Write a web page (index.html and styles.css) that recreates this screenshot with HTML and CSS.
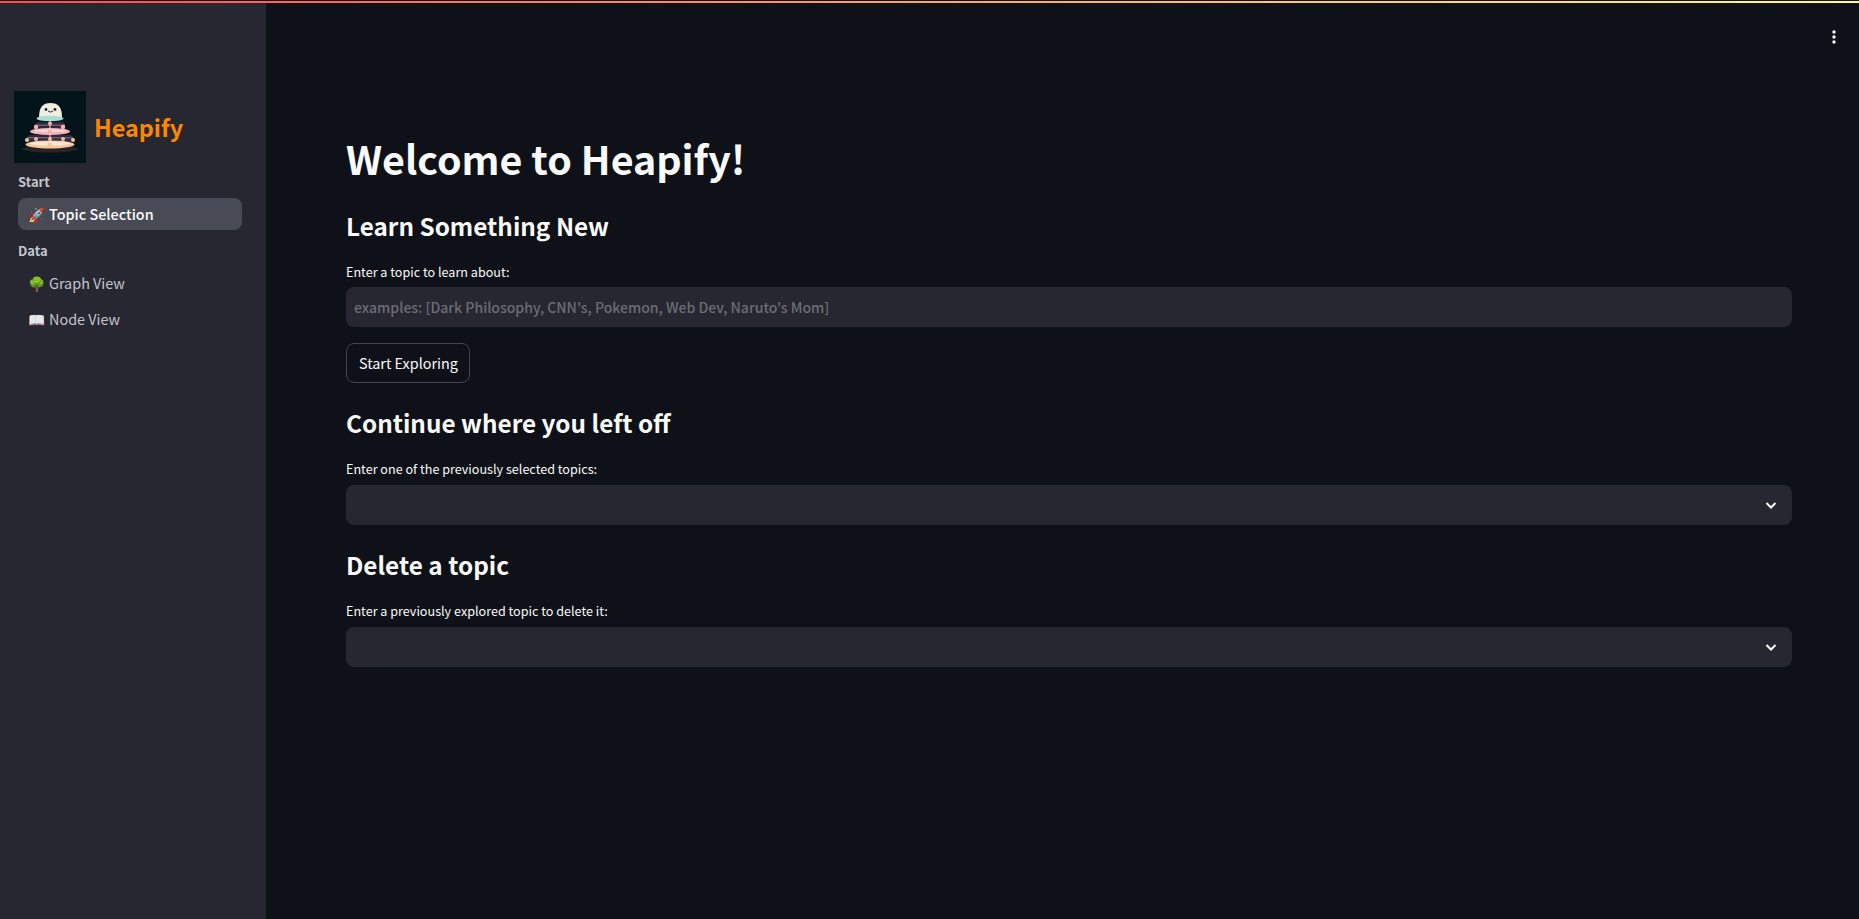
FILE: index.html
```html
<!DOCTYPE html>
<html lang="en">
<head>
  <meta charset="UTF-8" />
  <meta name="viewport" content="width=device-width, initial-scale=1.0"/>
  <title>Heapify</title>
  <link rel="stylesheet" href="styles.css">
</head>
<body>
  <div class="decoration"></div>

  <button class="menu-btn" aria-label="Main menu">
    <svg width="16" height="16" viewBox="0 0 16 16" fill="#fafafa">
      <circle cx="8" cy="3" r="1.7"/><circle cx="8" cy="8" r="1.7"/><circle cx="8" cy="13" r="1.7"/>
    </svg>
  </button>

  <div class="app">
    <aside class="sidebar">
      <div class="brand">
        <svg class="logo" width="72" height="72" viewBox="0 0 72 72">
          <defs><filter id="soft"><feGaussianBlur stdDeviation="0.35"/></filter></defs>
          <rect width="72" height="72" fill="#02141a"/>
          <g filter="url(#soft)">
            <ellipse cx="36" cy="58" rx="28" ry="3.500" fill="#2c2226"/>
            <!-- tiers, bottom up -->
            <rect x="13" y="44" width="46" height="7" rx="3.500" fill="#33293a"/>
            <rect x="13" y="46" width="46" height="1.500" fill="#6b5f70"/>
            <ellipse cx="36" cy="53.500" rx="24.500" ry="4" fill="#f6c79c"/>
            <ellipse cx="36" cy="52.500" rx="20" ry="2" fill="#fde9d3"/>
            <rect x="21" y="31" width="30" height="7" rx="3.500" fill="#33293a"/>
            <rect x="21" y="33.500" width="30" height="1.500" fill="#6b5f70"/>
            <ellipse cx="36" cy="40.500" rx="20" ry="3.500" fill="#f3b3b8"/>
            <ellipse cx="36" cy="39.800" rx="16" ry="1.500" fill="#fbd9da"/>
            <path d="M36 28v26" stroke="#f4e6dc" stroke-width="1"/>
            <path d="M25 26.500C25 16 29 12 36.500 12S48 16 48 26.500z" fill="#efeee0"/>
            <ellipse cx="36" cy="27.500" rx="13.500" ry="2.800" fill="#a6dfd6"/>
            <circle cx="32" cy="18.500" r="1.400" fill="#2b2430"/>
            <circle cx="41" cy="18.500" r="1.400" fill="#2b2430"/>
            <path d="M34 20q2.500 2.200 5 0" stroke="#2b2430" stroke-width="1" fill="none"/>
            <g fill="#f2b6a8">
              <circle cx="22" cy="36" r="2.200"/><circle cx="36" cy="32.500" r="2"/><circle cx="49" cy="36" r="2.200"/>
              <circle cx="36" cy="41" r="2.400"/><circle cx="22" cy="48" r="2"/><circle cx="36" cy="48" r="2"/><circle cx="49" cy="48" r="2"/>
            </g>
            <g fill="#f6c79c">
              <circle cx="13" cy="49" r="2"/><circle cx="59" cy="49" r="2"/><circle cx="36" cy="54" r="2.500"/>
            </g>
          </g>
        </svg>
        <span class="brand-name">Heapify</span>
      </div>

      <nav class="nav">
        <div class="nav-section">Start</div>
        <a class="nav-item active"><span class="emoji">🚀</span>Topic Selection</a>
        <div class="nav-section">Data</div>
        <a class="nav-item"><span class="emoji">🌳</span>Graph View</a>
        <a class="nav-item"><span class="emoji">📖</span>Node View</a>
      </nav>
    </aside>

    <main class="main">
      <h1>Welcome to Heapify!</h1>

      <h2>Learn Something New</h2>
      <label class="field-label">Enter a topic to learn about:</label>
      <input class="text-input" type="text" placeholder="examples: [Dark Philosophy, CNN's, Pokemon, Web Dev, Naruto's Mom]">
      <button class="btn">Start Exploring</button>

      <h2>Continue where you left off</h2>
      <label class="field-label">Enter one of the previously selected topics:</label>
      <div class="select">
        <svg width="16" height="16" viewBox="0 0 16 16" fill="none" stroke="#fafafa" stroke-width="2"><path d="M3.500 6l4.500 4.500L12.500 6"/></svg>
      </div>

      <h2>Delete a topic</h2>
      <label class="field-label">Enter a previously explored topic to delete it:</label>
      <div class="select">
        <svg width="16" height="16" viewBox="0 0 16 16" fill="none" stroke="#fafafa" stroke-width="2"><path d="M3.500 6l4.500 4.500L12.500 6"/></svg>
      </div>
    </main>
  </div>
</body>
</html>
```

FILE: styles.css
```css
* {
  box-sizing: border-box;
}

html, body {
  height: 100%;
}

body {
  margin: 0;
  padding-top: 1px;
  background: #0e1117;
  color: #fafafa;
  font-family: "Noto Sans CJK SC", "Noto Sans", sans-serif;
  font-size: 14.4px;
  display: flex;
  flex-direction: column;
  overflow: hidden;
}

.decoration {
  height: 2px;
  flex: none;
  background: linear-gradient(90deg, #ff4b4b, #fffd80);
}

.menu-btn {
  position: absolute;
  top: 29px;
  right: 17px;
  width: 16px;
  height: 16px;
  padding: 0;
  border: 0;
  background: none;
}

.app {
  flex: 1;
  display: flex;
  min-height: 0;
}

.sidebar {
  width: 266px;
  flex: none;
  background: #262730;
  padding: 88px 14px 0;
}

.brand {
  display: flex;
  align-items: center;
  gap: 8px;
}

.logo {
  display: block;
}

.brand-name {
  color: #ff8700;
  font-size: 23.4px;
  font-weight: 700;
  line-height: 32px;
}

.nav {
  padding: 9px 10px 0 4px;
  display: flex;
  flex-direction: column;
}

.nav-section {
  font-size: 13px;
  font-weight: 700;
  line-height: 20px;
  color: #c3c5cd;
  margin: 0 0 6px;
}

.nav-item + .nav-section {
  margin-top: 7px;
}

.nav-item {
  display: flex;
  align-items: center;
  height: 32px;
  margin-bottom: 4px;
  padding: 0 10px;
  border-radius: 8px;
  color: #c3c5cd;
  line-height: 24px;
}

.nav-item.active {
  background: #484a55;
  color: #fafafa;
  font-weight: 500;
}

.emoji {
  width: 21px;
  font-size: 14px;
  flex: none;
}

.main {
  flex: 1;
  min-width: 0;
  padding: 126px 67px 0 80px;
}

h1 {
  margin: 0;
  font-size: 39.4px;
  font-weight: 700;
  line-height: 57px;
}

h2 {
  margin: 22px 0 0;
  font-size: 24.3px;
  font-weight: 700;
  line-height: 36px;
}

.field-label {
  display: block;
  margin: 18px 0 5px;
  font-size: 12.6px;
  line-height: 20px;
}

.text-input {
  display: block;
  width: 100%;
  height: 40px;
  padding: 0 8px;
  border: 0;
  border-radius: 8px;
  background: #262730;
  color: #fafafa;
  font: inherit;
  font-size: 14.05px;
  font-weight: 500;
  line-height: 24px;
}

.text-input::placeholder {
  color: #6c6d74;
  opacity: 1;
}

.btn {
  display: block;
  height: 40px;
  margin-top: 16px;
  padding: 0 11px 0 12px;
  border: 1px solid #42444e;
  border-radius: 8px;
  background: #0e1117;
  color: #fafafa;
  font: inherit;
  line-height: 24px;
}

.select {
  height: 40px;
  margin-top: 6px;
  border-radius: 8px;
  background: #262730;
  display: flex;
  align-items: center;
  justify-content: flex-end;
  padding-right: 13px;
}
```
